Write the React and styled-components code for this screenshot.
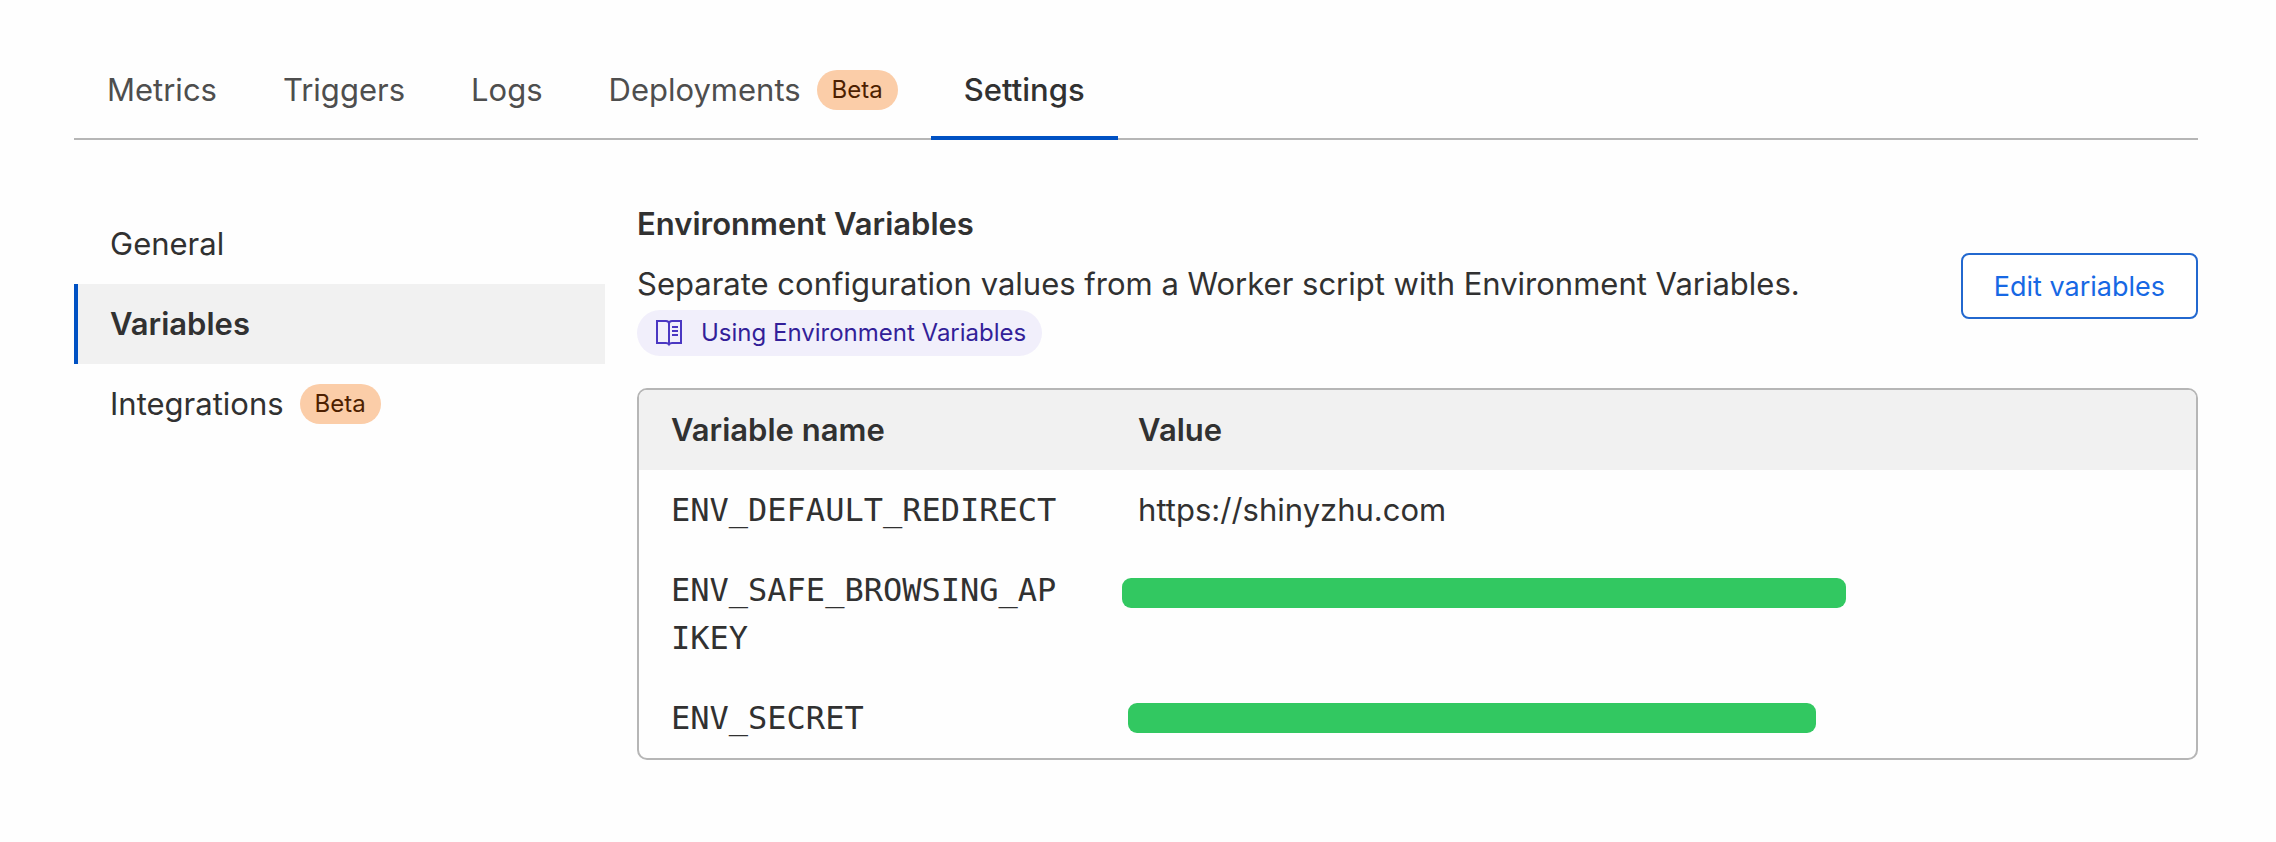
import React from "react";
import styled, { createGlobalStyle } from "styled-components";

const sans = 'Inter, "Liberation Sans", sans-serif';
const mono = '"DejaVu Sans Mono", "Liberation Mono", monospace';

const GlobalStyle = createGlobalStyle`
  *, *::before, *::after { box-sizing: border-box; }
  body {
    margin: 0;
    background: #fefefe;
    color: #313131;
    font-family: ${sans};
    font-size: 31px;
    line-height: 48px;
  }
`;

const Page = styled.main`
  padding: 40px 78px 82px 74px;
`;

const Tabs = styled.nav`
  display: flex;
  border-bottom: 2px solid #b6b6b6;
`;

const Tab = styled.a`
  display: flex;
  align-items: center;
  gap: 16px;
  height: 100px;
  margin-bottom: -2px;
  padding: 4px 33px 0;
  border-bottom: 4px solid ${(p) => (p.$active ? "#0051c3" : "transparent")};
  color: ${(p) => (p.$active ? "#313131" : "#4e4e4e")};
  font-weight: ${(p) => (p.$active ? 500 : 400)};
  text-decoration: none;
`;

const Badge = styled.span`
  padding: 0 15px;
  border-radius: 20px;
  background: #fbcda8;
  color: #4d1f00;
  font-size: 24px;
  font-weight: 400;
  line-height: 40px;
`;

const Columns = styled.div`
  display: flex;
  align-items: flex-start;
  gap: 32px;
  padding-top: 64px;
`;

const SideNav = styled.nav`
  flex: 0 0 25%;
`;

const SideLink = styled.a`
  display: flex;
  align-items: center;
  gap: 16px;
  height: 80px;
  padding: 0 32px;
  border-left: 4px solid ${(p) => (p.$active ? "#0051c3" : "transparent")};
  background: ${(p) => (p.$active ? "#f1f1f1" : "transparent")};
  color: #313131;
  font-weight: ${(p) => (p.$active ? 600 : 400)};
  text-decoration: none;
`;

const Content = styled.section`
  flex: 1;
  min-width: 0;
`;

const Intro = styled.header`
  display: flex;
  align-items: center;
  justify-content: space-between;
  gap: 32px;
`;

const IntroText = styled.div`
  padding-bottom: 12px;
`;

const Heading = styled.h2`
  margin: 0 0 16px;
  font-size: 31px;
  font-weight: 600;
  line-height: 40px;
`;

const Description = styled.p`
  margin: 0 0 2px;
`;

const DocLink = styled.a`
  display: flex;
  align-items: center;
  gap: 18px;
  width: fit-content;
  height: 46px;
  padding: 0 16px 0 18px;
  border-radius: 23px;
  background: #f1effb;
  color: #331f99;
  font-size: 24px;
  text-decoration: none;
`;

const EditButton = styled.button`
  flex: none;
  height: 66px;
  padding: 0 31px;
  border: 2px solid #2268cf;
  border-radius: 8px;
  background: #fff;
  color: #1768e4;
  font-family: ${sans};
  font-size: 27px;
`;

const TableFrame = styled.div`
  margin-top: 20px;
  border: 2px solid #b6b6b6;
  border-radius: 10px;
  overflow: hidden;
`;

const Table = styled.table`
  width: 100%;
  table-layout: fixed;
  border-collapse: collapse;
  text-align: left;
`;

const HeadCell = styled.th`
  width: ${(p) => p.$width || "auto"};
  padding: 16px 32px;
  background: #f1f1f1;
  font-weight: 600;
`;

const NameCell = styled.td`
  padding: 16px 32px;
  font-family: ${mono};
  font-size: 32px;
  word-break: break-all;
  vertical-align: top;
`;

const ValueCell = styled.td`
  padding: 16px 32px;
  padding-left: ${(p) => p.$indent || 32}px;
  vertical-align: top;
`;

const Redaction = styled.div`
  width: ${(p) => p.$width}px;
  max-width: 100%;
  height: 30px;
  margin-top: ${(p) => p.$top}px;
  border-radius: 9px;
  background: #32c861;
`;

function BookIcon() {
  return (
    <svg width="28" height="28" viewBox="0 0 28 28" fill="none" stroke="#4a37c2" strokeWidth="2" aria-hidden="true">
      <path d="M14 25.500c-1-1.500-2-1.500-3-1.500H2V2h9c1.500 0 3 .6 3 2.500 0-1.900 1.500-2.500 3-2.500h9v22h-9c-1 0-2 0-3 1.500ZM14 4v21" />
      <path d="M17 8h6M17 12h6M17 16h6" />
    </svg>
  );
}

const tabs = [
  { label: "Metrics" },
  { label: "Triggers" },
  { label: "Logs" },
  { label: "Deployments", beta: true },
  { label: "Settings", active: true },
];

const sections = [
  { label: "General" },
  { label: "Variables", active: true },
  { label: "Integrations", beta: true },
];

const variables = [
  { name: "ENV_DEFAULT_REDIRECT", value: "https://shinyzhu.com" },
  { name: "ENV_SAFE_BROWSING_APIKEY", hidden: { indent: 16, width: 724, top: 12 } },
  { name: "ENV_SECRET", hidden: { indent: 22, width: 688, top: 9 } },
];

export default function App() {
  return (
    <>
      <GlobalStyle />
      <Page>
        <Tabs aria-label="Worker">
          {tabs.map((t) => (
            <Tab key={t.label} href="#" $active={t.active} aria-current={t.active ? "page" : undefined}>
              {t.label}
              {t.beta && <Badge>Beta</Badge>}
            </Tab>
          ))}
        </Tabs>
        <Columns>
          <SideNav aria-label="Settings">
            {sections.map((s) => (
              <SideLink key={s.label} href="#" $active={s.active} aria-current={s.active ? "page" : undefined}>
                {s.label}
                {s.beta && <Badge>Beta</Badge>}
              </SideLink>
            ))}
          </SideNav>
          <Content>
            <Intro>
              <IntroText>
                <Heading>Environment Variables</Heading>
                <Description>
                  Separate configuration values from a Worker script with Environment Variables.
                </Description>
                <DocLink href="#">
                  <BookIcon />
                  Using Environment Variables
                </DocLink>
              </IntroText>
              <EditButton type="button">Edit variables</EditButton>
            </Intro>
            <TableFrame>
              <Table>
                <thead>
                  <tr>
                    <HeadCell scope="col" $width="30%">Variable name</HeadCell>
                    <HeadCell scope="col">Value</HeadCell>
                  </tr>
                </thead>
                <tbody>
                  {variables.map((v) => (
                    <tr key={v.name}>
                      <NameCell>{v.name}</NameCell>
                      <ValueCell $indent={v.hidden?.indent}>
                        {v.hidden ? <Redaction $width={v.hidden.width} $top={v.hidden.top} /> : v.value}
                      </ValueCell>
                    </tr>
                  ))}
                </tbody>
              </Table>
            </TableFrame>
          </Content>
        </Columns>
      </Page>
    </>
  );
}
